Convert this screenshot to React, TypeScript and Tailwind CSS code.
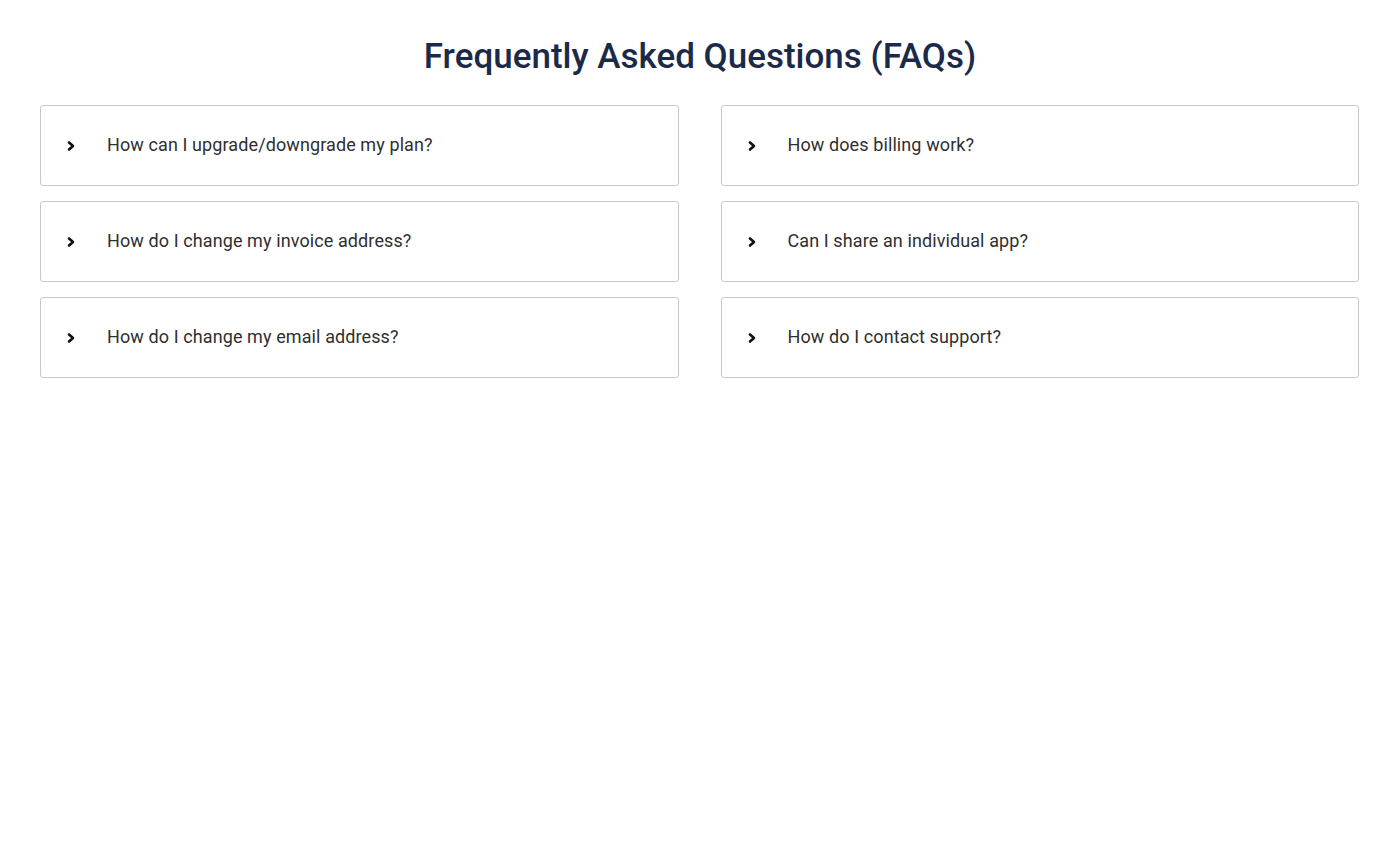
import React from "react";

const left = [
  "How can I upgrade/downgrade my plan?",
  "How do I change my invoice address?",
  "How do I change my email address?",
];
const right = [
  "How does billing work?",
  "Can I share an individual app?",
  "How do I contact support?",
];

function Chevron() {
  return (
    <svg width="10" height="12" viewBox="0 0 10 12" className="shrink-0">
      <path d="M3 2.5 L7 6 L3 9.5" fill="none" stroke="#111" strokeWidth="2.6" strokeLinecap="round" strokeLinejoin="round" />
    </svg>
  );
}

function Item({ q }: { q: string }) {
  return (
    <div className="h-[81px] rounded-[3px] border border-[#c9c9c9] bg-white flex items-center pl-[25px]">
      <Chevron />
      <span className="ml-[31px] -mt-[2px] text-[18px] tracking-[0.1px] text-[#2f2f2f]">{q}</span>
    </div>
  );
}

export default function App() {
  return (
    <div className="min-h-[855px] w-[1400px] bg-white" style={{ fontFamily: "Roboto, 'Open Sans', sans-serif" }}>
      <h1 className="pt-[35px] text-center text-[35px] font-medium leading-[44px] text-[#1b2a48]">
        Frequently Asked Questions (FAQs)
      </h1>
      <div className="mt-[26px] pl-[40px] pr-[41px] grid grid-cols-2 gap-x-[42px]">
        <div className="flex flex-col gap-[15px]">
          {left.map((q) => (
            <Item key={q} q={q} />
          ))}
        </div>
        <div className="flex flex-col gap-[15px]">
          {right.map((q) => (
            <Item key={q} q={q} />
          ))}
        </div>
      </div>
    </div>
  );
}
